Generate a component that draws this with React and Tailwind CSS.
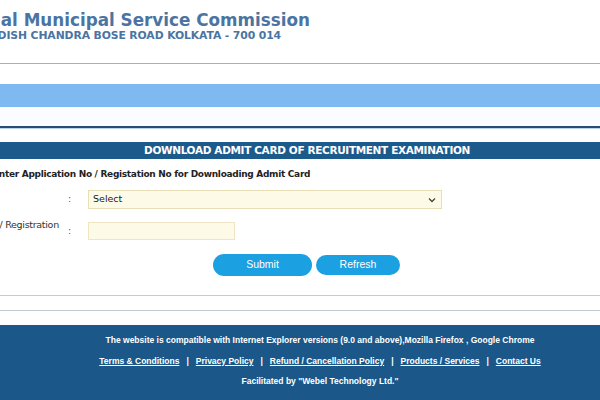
import React from "react";

export default function App() {
  return (
    <div className="w-[600px] h-[400px] overflow-hidden bg-white font-['DejaVu_Sans',sans-serif]">
      <div className="-ml-[40px] w-[720px] flex flex-col">
        {/* Header */}
        <div className="h-[63px] pt-[10px]">
          <div className="w-[350px] flex justify-end whitespace-nowrap">
            <div className="text-[16.8px] leading-[20px] font-bold text-[#4b74a2]">West Bengal Municipal Service Commission</div>
          </div>
          <div className="w-[321px] flex justify-end whitespace-nowrap">
            <div className="text-[10.8px] leading-[12px] font-bold text-[#4b74a2] tracking-[-0.1px]">8, JAGADISH CHANDRA BOSE ROAD KOLKATA - 700 014</div>
          </div>
        </div>
        <div className="h-px bg-[#9fb2c4]" />
        <div className="h-[20px]" />
        <div className="h-[23px] bg-[#7fb9f2]" />
        <div className="h-[19px] bg-[#fafcff]" />
        <div className="h-[2px] bg-[#2d4c74]" />
        <div className="h-px bg-[#bcd3ea]" />
        <div className="h-[13px]" />
        {/* Title bar */}
        <div className="h-[17px] bg-[#1d5a8c] flex items-center justify-center pr-[26px]">
          <span className="text-white font-bold text-[10.5px] leading-none tracking-[-0.35px]">DOWNLOAD ADMIT CARD OF RECRUITMENT EXAMINATION</span>
        </div>
        {/* Form */}
        <div className="-ml-[50px] pt-[9px] flex flex-col">
          <div className="pl-[83px] text-[9px] leading-[12px] font-bold text-[#222] whitespace-nowrap tracking-[-0.3px]">
            Enter Application No / Registation No for Downloading Admit Card
          </div>
          <div className="mt-[10px] flex items-center h-[19px]">
            <div className="w-[158px] pl-[22px] text-[9.5px] text-[#333] whitespace-nowrap">Select Type</div>
            <div className="w-[20px] text-[9.5px] text-[#555]">:</div>
            <div className="w-[354px] h-[19px] bg-[#fdfbe8] border border-[#e8dfb8] flex items-center justify-between px-[4px]">
              <span className="text-[9.5px] text-[#222]">Select</span>
              <svg width="8" height="6" viewBox="0 0 8 6" className="mr-[1px]">
                <path d="M1 1.5 L4 4.5 L7 1.5" stroke="#444" strokeWidth="1.3" fill="none" />
              </svg>
            </div>
          </div>
          <div className="mt-[10px] flex items-center h-[24px]">
            <div className="w-[158px] pl-[22px] text-[9.5px] leading-[12px] text-[#333] whitespace-nowrap tracking-[-0.3px]">
              Application No / Registration
              <br />
              No
            </div>
            <div className="w-[20px] text-[9.5px] text-[#555]">:</div>
            <div className="w-[147px] h-[18px] bg-[#fdfbe8] border border-[#efe4c4]" />
          </div>
          <div className="mt-[11px] flex pl-[303px] gap-[4px] items-center h-[22px] font-['Liberation_Sans',sans-serif]">
            <div className="w-[99px] h-[22px] rounded-full bg-[#1ba0e2] text-white text-[10.5px] flex items-center justify-center">Submit</div>
            <div className="w-[84px] h-[20px] rounded-full bg-[#1ba0e2] text-white text-[10.5px] flex items-center justify-center">Refresh</div>
          </div>
        </div>
        <div className="h-[19px]" />
        <div className="h-px bg-[#c3ccd6]" />
        <div className="h-[14px]" />
        <div className="h-px bg-[#c3ccd6]" />
        <div className="h-[14px]" />
        {/* Footer */}
        <div className="h-[80px] bg-[#1b5789] flex flex-col items-center pt-[9px] gap-[8.5px] text-white font-bold font-['Liberation_Sans',sans-serif] text-[8.5px] leading-[12px]">
          <div>The website is compatible with Internet Explorer versions (9.0 and above),Mozilla Firefox , Google Chrome</div>
          <div className="flex gap-[7px] whitespace-nowrap">
            <span className="underline">Terms &amp; Conditions</span>
            <span>|</span>
            <span className="underline">Privacy Policy</span>
            <span>|</span>
            <span className="underline">Refund / Cancellation Policy</span>
            <span>|</span>
            <span className="underline">Products / Services</span>
            <span>|</span>
            <span className="underline">Contact Us</span>
          </div>
          <div>Facilitated by "Webel Technology Ltd."</div>
        </div>
      </div>
    </div>
  );
}
